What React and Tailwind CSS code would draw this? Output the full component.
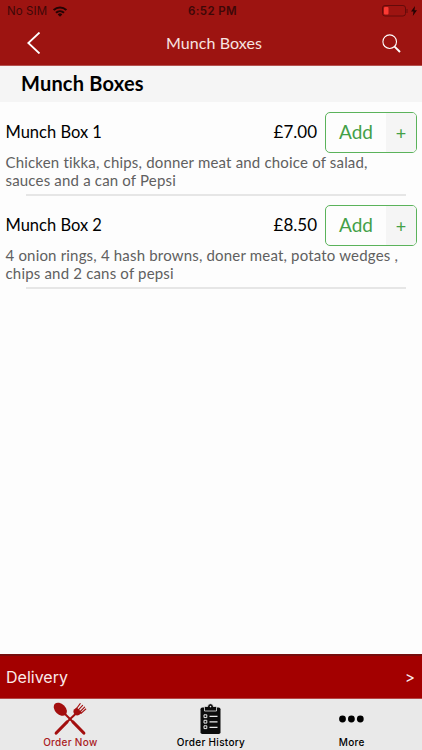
import React from 'react';

const items = [
  {
    name: 'Munch Box 1',
    price: '£7.00',
    lines: ['Chicken tikka, chips, donner meat and choice of salad,', 'sauces and a can of Pepsi'],
  },
  {
    name: 'Munch Box 2',
    price: '£8.50',
    lines: ['4 onion rings, 4 hash browns, doner meat, potato wedges ,', 'chips and 2 cans of pepsi'],
  },
];

function StatusBar() {
  return (
    <div className="flex h-[22px] items-center justify-between pl-[7px] pr-[5px] text-[11.5px] text-[#3d0808]">
      <div className="flex w-[100px] items-center gap-[6px]">
        <span className="pt-px tracking-[0.1px]">No SIM</span>
        <svg width="14" height="11" viewBox="0 0 14 11" fill="none" stroke="#240404" strokeWidth="2.1">
          <path d="M0.7 4.1a9 9 0 0 1 12.6 0" />
          <path d="M3 6.8a5.8 5.8 0 0 1 8 0" />
          <path d="M7 10.8 4.7 8.5a3.2 3.2 0 0 1 4.6 0Z" fill="#240404" stroke="none" />
        </svg>
      </div>
      <span className="pl-px pt-px font-semibold tracking-[0.4px]">6:52 PM</span>
      <div className="flex w-[100px] items-center justify-end gap-[3px]">
        <svg width="26" height="12" viewBox="0 0 26 12">
          <rect x="0.5" y="0.5" width="23" height="10.5" rx="2.5" fill="none" stroke="#650b0a" />
          <rect x="2" y="2" width="4.5" height="7.5" rx="1" fill="#fb3b34" />
          <path d="M25 4v4" stroke="#650b0a" />
        </svg>
        <svg width="6" height="10" viewBox="0 0 6 10" fill="#240404">
          <path d="M4 0 0 5.5h2.5L1.8 10 6 4.2H3.5Z" />
        </svg>
      </div>
    </div>
  );
}

function Header() {
  return (
    <header className="h-[66px] border-b border-[#b4524f] bg-[#9d1411]">
      <StatusBar />
      <div className="flex h-[42px] items-center justify-between pl-[27px] pr-[21px] text-[#f7e4e2]">
        <svg width="19" height="22" viewBox="0 0 19 22" fill="none" stroke="#fff" strokeWidth="1.8">
          <path d="M12.5 0.5 1.3 11l11.2 10.5" />
        </svg>
        <span className="font-[Lato] text-[16px] tracking-[0.1px]">Munch Boxes</span>
        <svg width="19" height="19" viewBox="0 0 19 19" fill="none" stroke="#fff">
          <circle cx="7.7" cy="7.7" r="6.8" strokeWidth="1.1" />
          <path d="m12.6 12.6 5.4 5.4" strokeWidth="1.9" />
        </svg>
      </div>
    </header>
  );
}

function MenuItem({ item }) {
  return (
    <div className="h-[93px] pl-[5.5px] pt-[10px]">
      <div className="flex h-[40px] items-start pr-[5px]">
        <span className="flex-1 text-[16.5px] leading-[41px] text-black">{item.name}</span>
        <span className="mr-2 text-[17px] leading-[40px] text-black">{item.price}</span>
        <button className="flex h-[41px] w-[92px] items-stretch overflow-hidden rounded-[5px] border-[1.5px] border-[#5bb35b] text-[#43a047]">
          <span className="flex w-[60px] items-center justify-center text-[19px]">Add</span>
          <span className="flex flex-1 items-center justify-center bg-[#f5f5f5] pt-[2px] text-[18px]">+</span>
        </button>
      </div>
      <p className="pt-px text-[15px] leading-[18px] tracking-[0.18px] text-[#606060]">
        {item.lines.map((line) => (
          <span key={line} className="block whitespace-nowrap">
            {line}
          </span>
        ))}
      </p>
      <div className="ml-[20.5px] mr-4 mt-[5px] h-[1.5px] bg-[#e6e6e6]" />
    </div>
  );
}

function CutleryIcon() {
  return (
    <svg width="34" height="34" viewBox="0 0 34 34" fill="none" stroke="#a30f0f" strokeLinecap="round">
      <ellipse cx="7.3" cy="7.2" rx="5.3" ry="7.6" transform="rotate(-45 7.3 7.2)" fill="#a30f0f" stroke="none" />
      <path d="M12 12 19 19" strokeWidth="2" />
      <path d="m20 20 10.8 11" strokeWidth="3.2" />
      <path d="M23 11.5 15 19" strokeWidth="2" />
      <path d="M14 20 3.2 31" strokeWidth="3.2" />
      <path d="M21 7.6c-1.9 2.8.9 7.2 5 5.4l3-2.4-5.3-5.2Z" fill="#a30f0f" stroke="none" />
      <path d="m23.2 7 4-5.3M25 8.4l4.6-5M26.8 10l4.8-4.8M28 11.4l4.8-4.4" strokeWidth="1.1" />
    </svg>
  );
}

function ClipboardIcon() {
  return (
    <svg width="22" height="32" viewBox="0 0 22 32" fill="#0c0c0c">
      <rect x="0.5" y="4.5" width="20" height="26.5" rx="1.8" />
      <path d="M4.5 8V4.5Q4.5 3.5 5.5 3.5h2.2a2.8 2.8 0 0 1 5.6 0h2.2q1 0 1 1V8Z" stroke="#e9e9e9" strokeWidth="0.8" />
      <circle cx="10.5" cy="3.6" r="0.8" fill="#e9e9e9" />
      <g fill="none" stroke="#e9e9e9" strokeWidth="1">
        <path d="M4 11.8h2.8v2.8H4ZM4 17.3h2.8v2.8H4ZM4 22.8h2.8v2.8H4Z" />
        <path d="M9.5 13.3h8M9.5 18.8h8M9.5 24.3h8" strokeWidth="1.2" />
      </g>
    </svg>
  );
}

function DotsIcon() {
  return (
    <svg width="26" height="8" viewBox="0 0 26 8" fill="#000">
      <circle cx="3.5" cy="4" r="3.4" />
      <circle cx="12.4" cy="4" r="3.4" />
      <circle cx="21.3" cy="4" r="3.4" />
    </svg>
  );
}

function Tab({ icon, label, active }) {
  return (
    <button className={`flex flex-col items-center ${active ? 'text-[#a9201e]' : 'text-black'}`}>
      <span className="flex h-[37px] items-center pt-[3px]">{icon}</span>
      <span className="text-[10px] font-medium leading-[13px] tracking-[0.3px]">{label}</span>
    </button>
  );
}

export default function App() {
  return (
    <div className="flex h-[750px] w-[422px] flex-col overflow-hidden bg-[#fdfdfd] font-[Inter,sans-serif]">
      <Header />
      <main className="flex-1 font-[Lato,sans-serif] [font-variant-ligatures:none]">
        <h1 className="h-9 bg-[#f5f5f5] pl-[21px] text-[20px] font-bold leading-[35px] tracking-[0.2px] text-black">
          Munch Boxes
        </h1>
        {items.map((item) => (
          <MenuItem key={item.name} item={item} />
        ))}
      </main>
      <div className="flex h-[45px] items-center justify-between border-b border-t-2 border-b-[#b44745] border-t-[#760d0d] bg-[#a30000] pl-1.5 pr-[7px] text-[16px] text-[#faeaea]">
        <span>Delivery</span>
        <span className="pt-[3px] text-[15px]">&gt;</span>
      </div>
      <nav className="grid h-[51px] grid-cols-3 bg-[#e9e9e9]">
        <Tab icon={<CutleryIcon />} label="Order Now" active />
        <Tab icon={<ClipboardIcon />} label="Order History" />
        <Tab icon={<DotsIcon />} label="More" />
      </nav>
    </div>
  );
}
